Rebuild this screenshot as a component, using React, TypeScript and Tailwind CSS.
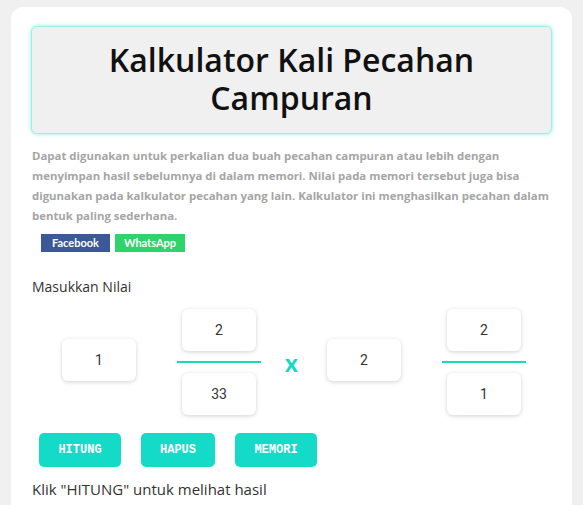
import React from 'react';

const Box = ({ value }: { value: string }) => (
  <div className="flex h-[42px] w-[74px] items-center justify-center rounded-md bg-white text-[14px] text-[#333] shadow-[0_1px_4px_rgba(0,0,0,0.18)] [font-family:Roboto,sans-serif]">
    {value}
  </div>
);

const Fraction = ({ top, bottom }: { top: string; bottom: string }) => (
  <div className="flex w-[84px] flex-col items-center">
    <Box value={top} />
    <div className="my-[10px] h-[2px] w-full bg-[#16d9c4]" />
    <Box value={bottom} />
  </div>
);

export default function App() {
  return (
    <div className="min-h-[505px] bg-[#f0f0f0] px-[11px] pt-[7px] [font-family:'Open_Sans',Lato,sans-serif]">
      <div className="rounded-t-xl bg-white px-5 pt-[19px] pb-4">
        <div className="rounded-md border border-[#9cf0e6] bg-[#f0f0f0] px-4 pt-[14px] pb-[16px] text-center shadow-[0_0_4px_rgba(20,220,200,0.5)]">
          <h1 className="text-[32px] font-semibold leading-[38px] text-[#111]">
            <span className="block">Kalkulator Kali Pecahan</span>
            <span className="block">Campuran</span>
          </h1>
        </div>

        <p className="mt-[12px] pl-px text-[11.4px] font-bold leading-[20px] text-[#a5a5a5]">
          Dapat digunakan untuk perkalian dua buah pecahan campuran atau lebih dengan menyimpan hasil sebelumnya di dalam memori. Nilai pada memori tersebut juga bisa digunakan pada kalkulator pecahan yang lain. Kalkulator ini menghasilkan pecahan dalam bentuk paling sederhana.
        </p>

        <div className="mt-[8px] ml-[10px] flex gap-[5px]">
          <span className="flex h-[18px] w-[69px] items-center justify-center bg-[#3b5998] text-[11px] font-bold text-white [font-family:'Comic_Sans_MS',Lato,sans-serif]">
            Facebook
          </span>
          <span className="flex h-[18px] w-[70px] items-center justify-center bg-[#2ed36a] text-[11px] font-bold text-white [font-family:'Comic_Sans_MS',Lato,sans-serif]">
            WhatsApp
          </span>
        </div>

        <div className="mt-[25px] pl-px text-[14px] leading-[20px] text-[#333]">Masukkan Nilai</div>

        <div className="mt-[12px] flex items-center">
          <div className="ml-[31px] mb-[4px]">
            <Box value="1" />
          </div>
          <div className="ml-[41px]">
            <Fraction top="2" bottom="33" />
          </div>
          <div className="ml-[24px] w-[13px] pt-[2px] text-center text-[24px] font-black leading-none text-[#16d9c4] [font-family:Lato,sans-serif]">
            x
          </div>
          <div className="ml-[29px] mb-[4px]">
            <Box value="2" />
          </div>
          <div className="ml-[41px]">
            <Fraction top="2" bottom="1" />
          </div>
        </div>

        <div className="mt-[18px] ml-[8px] flex gap-5 [font-family:'Liberation_Mono',monospace]">
          <button className="h-[34px] w-[82px] rounded-[5px] bg-[#14dbc8] text-[12px] font-bold text-white">HITUNG</button>
          <button className="h-[34px] w-[74px] rounded-[5px] bg-[#14dbc8] text-[12px] font-bold text-white">HAPUS</button>
          <button className="h-[34px] w-[82px] rounded-[5px] bg-[#14dbc8] text-[12px] font-bold text-white">MEMORI</button>
        </div>

        <div className="mt-[11px] pl-px text-[15px] leading-[22px] text-[#333]">Klik "HITUNG" untuk melihat hasil</div>
      </div>
    </div>
  );
}
